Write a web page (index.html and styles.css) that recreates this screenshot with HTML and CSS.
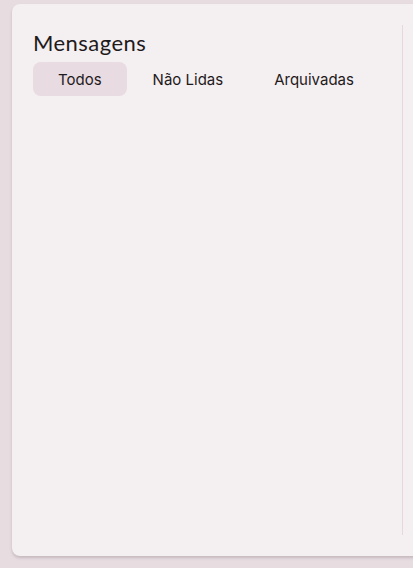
FILE: index.html
```html
<!DOCTYPE html>
<html lang="pt">
<head>
  <meta charset="UTF-8" />
  <meta name="viewport" content="width=device-width, initial-scale=1.0" />
  <title>Mensagens</title>
  <link rel="stylesheet" href="styles.css">
</head>
<body>
  <div class="card">
    <div class="inbox">
      <h1 class="title">Mensagens</h1>
      <div class="tabs">
        <button class="tab active">Todos</button>
        <button class="tab">Não Lidas</button>
        <button class="tab">Arquivadas</button>
      </div>
    </div>
    <div class="detail"></div>
  </div>
</body>
</html>
```

FILE: styles.css
```css
* {
  box-sizing: border-box;
}
body {
  margin: 0;
  background: #e7dde1;
  font-family: Inter, "Noto Sans", sans-serif;
  color: #1f1a1c;
  overflow: hidden;
  height: 568px;
}
.card {
  display: flex;
  width: 520px;
  height: 552px;
  margin: 4px 0 0 12px;
  background: #f4eff0;
  border-radius: 8px;
  box-shadow: 0 2px 3px rgba(80, 60, 70, 0.22);
}
.inbox {
  width: 390px;
  padding: 25px 21px 0 21px;
}
.title {
  margin: 0 0 5px;
  font-family: Lato, sans-serif;
  font-weight: 400;
  font-size: 22px;
  line-height: 28px;
  letter-spacing: 0.45px;
}
.tabs {
  display: flex;
  gap: 1px;
}
.tab {
  height: 34px;
  padding: 0 25px;
  border: none;
  border-radius: 8px;
  background: none;
  font-family: Inter, sans-serif;
  font-size: 15px;
  color: #1f1a1c;
}
.tab.active {
  background: #e8dbe1;
}
.detail {
  flex: 1;
  margin: 21px 0;
  border-left: 1px solid #e6d8dd;
}
```
